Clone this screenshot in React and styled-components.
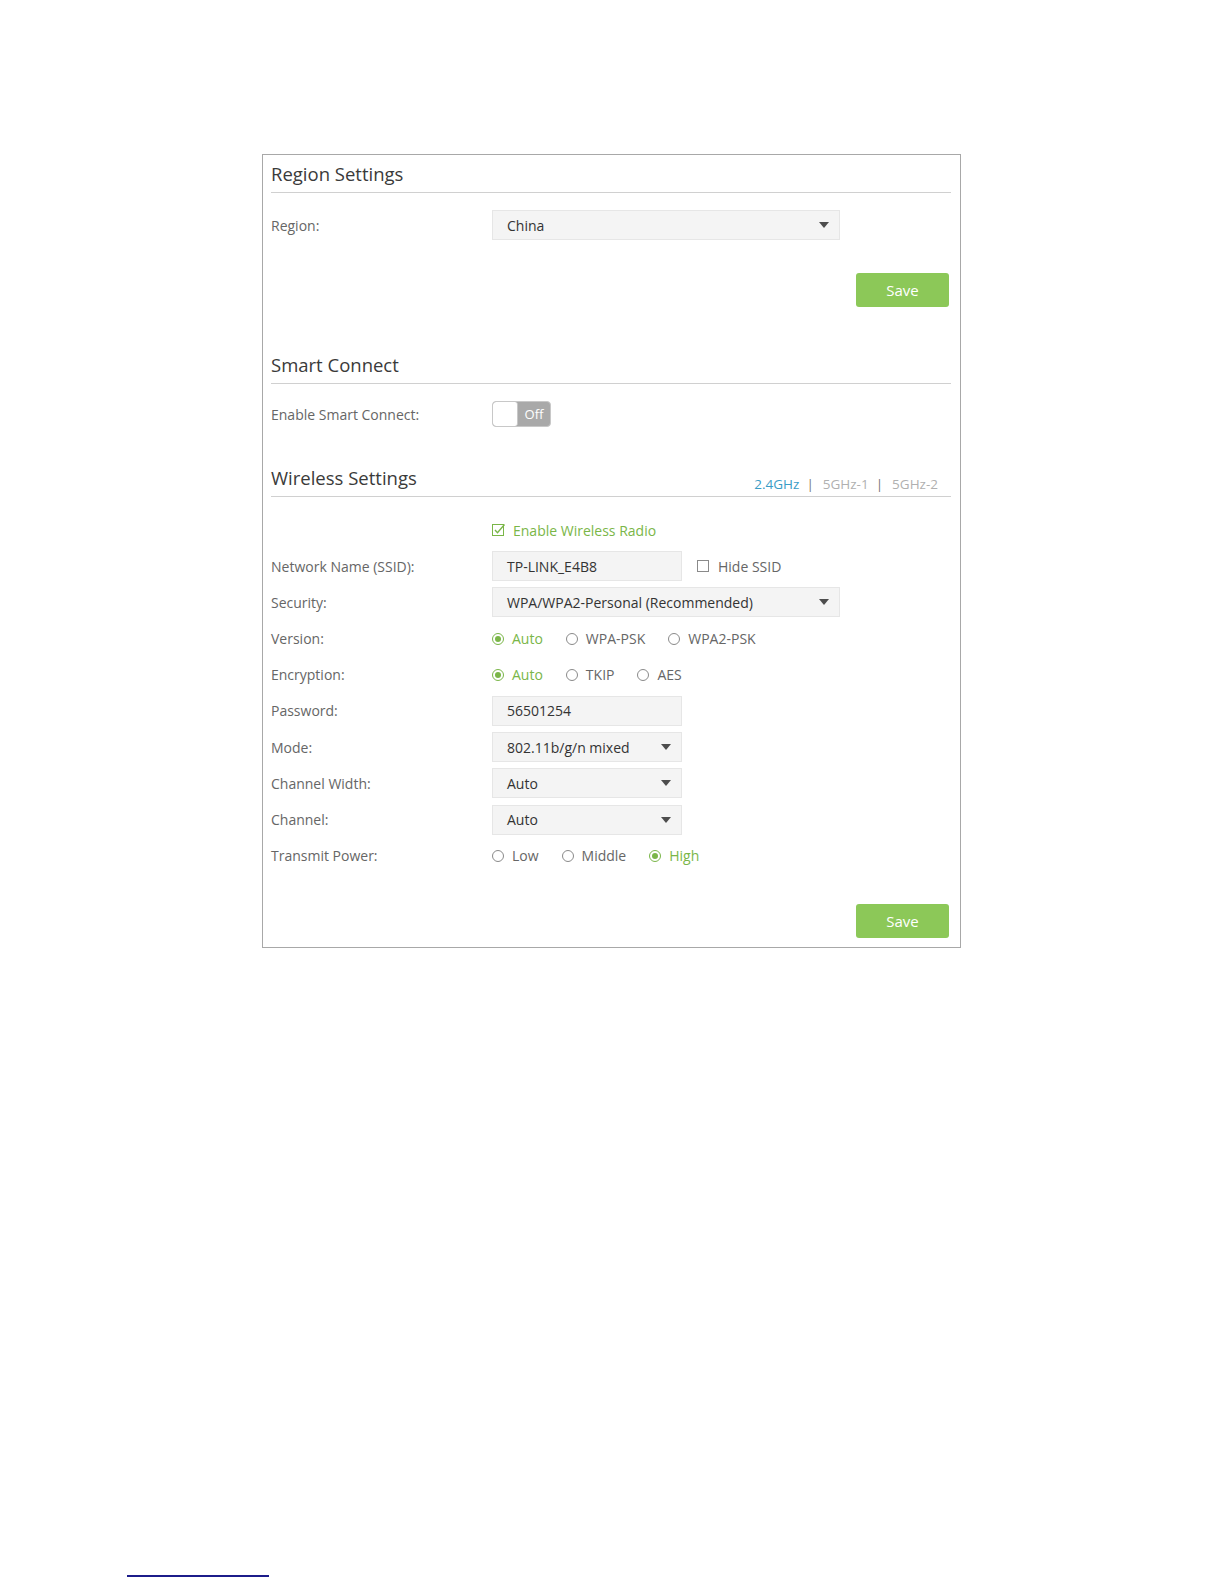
import styled, { createGlobalStyle } from 'styled-components';

const GlobalStyle = createGlobalStyle`
  body {
    margin: 0;
    background: #fff;
    font-family: "Open Sans", "Liberation Sans", sans-serif;
  }
`

const App = () => {
  return (
    <Page>
      <GlobalStyle />
      <Panel>
        <SectionHeader>
          <Title>Region Settings</Title>
        </SectionHeader>
        <Row top={17}>
          <Label>Region:</Label>
          <Field wide>China<Caret /></Field>
        </Row>
        <ButtonRow top={33}>
          <SaveButton>Save</SaveButton>
        </ButtonRow>

        <SectionHeader gap={39}>
          <Title>Smart Connect</Title>
        </SectionHeader>
        <Row top={15}>
          <Label>Enable Smart Connect:</Label>
          <Toggle>
            <Knob />
            <ToggleText>Off</ToggleText>
          </Toggle>
        </Row>

        <SectionHeader gap={30}>
          <Title>Wireless Settings</Title>
          <Tabs>
            <Tab active>2.4GHz</Tab>
            <Sep>|</Sep>
            <Tab>5GHz-1</Tab>
            <Sep>|</Sep>
            <Tab>5GHz-2</Tab>
          </Tabs>
        </SectionHeader>
        <Row top={18}>
          <Label />
          <Check checked>
            <CheckBox checked />
            Enable Wireless Radio
          </Check>
        </Row>
        <Row>
          <Label>Network Name (SSID):</Label>
          <Field>TP-LINK_E4B8</Field>
          <Check side>
            <CheckBox />
            Hide SSID
          </Check>
        </Row>
        <Row>
          <Label>Security:</Label>
          <Field wide>WPA/WPA2-Personal (Recommended)<Caret /></Field>
        </Row>
        <Row>
          <Label>Version:</Label>
          <Radios>
            <Radio checked><Dot checked />Auto</Radio>
            <Radio><Dot />WPA-PSK</Radio>
            <Radio><Dot />WPA2-PSK</Radio>
          </Radios>
        </Row>
        <Row>
          <Label>Encryption:</Label>
          <Radios>
            <Radio checked><Dot checked />Auto</Radio>
            <Radio><Dot />TKIP</Radio>
            <Radio><Dot />AES</Radio>
          </Radios>
        </Row>
        <Row>
          <Label>Password:</Label>
          <Field>56501254</Field>
        </Row>
        <Row>
          <Label>Mode:</Label>
          <Field>802.11b/g/n mixed<Caret /></Field>
        </Row>
        <Row>
          <Label>Channel Width:</Label>
          <Field>Auto<Caret /></Field>
        </Row>
        <Row>
          <Label>Channel:</Label>
          <Field>Auto<Caret /></Field>
        </Row>
        <Row>
          <Label>Transmit Power:</Label>
          <Radios>
            <Radio><Dot />Low</Radio>
            <Radio><Dot />Middle</Radio>
            <Radio checked><Dot checked />High</Radio>
          </Radios>
        </Row>
        <ButtonRow top={33}>
          <SaveButton>Save</SaveButton>
        </ButtonRow>
      </Panel>
      <Footnote />
    </Page>
  );
}

const CheckBox = ({ checked }) => (
  <svg width="14" height="14" viewBox="0 0 14 14" style={{ marginRight: 7, flexShrink: 0 }}>
    <rect x="0.5" y="1.5" width="11" height="11" fill="#fff" stroke={checked ? '#7ab648' : '#8a8a8a'} />
    {checked && <path d="M3 7 L5.5 9.8 L12.5 1.5" fill="none" stroke="#7ab648" strokeWidth="1.4" />}
  </svg>
)

const Page = styled.div`
  width: 1224px;
  min-height: 1584px;
  box-sizing: border-box;
  padding-top: 154px;
  overflow: hidden;
`

const Panel = styled.div`
  width: 699px;
  margin-left: 262px;
  box-sizing: border-box;
  border: 1px solid #a8a8a8;
  padding: 0 9px 9px 8px;
`

const SectionHeader = styled.div`
  display: flex;
  justify-content: space-between;
  align-items: baseline;
  height: 37px;
  margin-top: ${p => p.gap || 0}px;
  border-bottom: 1px solid #d0d0d0;
`

const Title = styled.h2`
  margin: 0;
  font-size: 18.5px;
  font-weight: 400;
  line-height: 37px;
  color: #3a3a3a;
`

const Tabs = styled.div`
  display: flex;
  align-items: baseline;
  margin-right: 13px;
  font-size: 13.5px;
  position: relative;
  top: 4px;
`

const Tab = styled.span`
  color: ${p => (p.active ? '#3a9cc6' : '#b0b0b0')};
`

const Sep = styled.span`
  color: #777;
  padding: 0 9px 0 7px;
`

const Row = styled.div`
  display: flex;
  align-items: center;
  height: 30px;
  margin-top: ${p => p.top ?? 6.2}px;
`

const Label = styled.div`
  width: 221px;
  flex-shrink: 0;
  font-size: 14px;
  color: #666;
`

const Field = styled.div`
  display: flex;
  align-items: center;
  justify-content: space-between;
  box-sizing: border-box;
  width: ${p => (p.wide ? 348 : 190)}px;
  height: 30px;
  padding: 0 10px 0 14px;
  background: #f4f4f4;
  border: 1px solid #e6e6e6;
  font-size: 14px;
  color: #333;
`

const Caret = styled.span`
  width: 0;
  height: 0;
  border-left: 5px solid transparent;
  border-right: 5px solid transparent;
  border-top: 6px solid #4d4d4d;
`

const ButtonRow = styled.div`
  display: flex;
  justify-content: flex-end;
  margin-top: ${p => p.top}px;
`

const SaveButton = styled.button`
  width: 93px;
  height: 34px;
  margin-right: 2px;
  border: none;
  border-radius: 3px;
  background: #8cc858;
  color: #fff;
  font-family: inherit;
  font-size: 15px;
  cursor: pointer;
`

const Toggle = styled.div`
  display: flex;
  width: 59px;
  height: 26px;
  box-sizing: border-box;
  border: 1px solid #c8c8c8;
  border-radius: 4px;
  background: #a9a9a9;
  overflow: hidden;
`

const Knob = styled.div`
  width: 24px;
  background: #fff;
  border-right: 1px solid #c8c8c8;
  border-radius: 3px;
`

const ToggleText = styled.span`
  flex: 1;
  text-align: center;
  line-height: 24px;
  font-size: 13px;
  color: #fff;
`

const Check = styled.label`
  display: flex;
  align-items: center;
  margin-left: ${p => (p.side ? 15 : 0)}px;
  font-size: 14px;
  color: ${p => (p.checked ? '#7ab648' : '#666')};
`

const Radios = styled.div`
  display: flex;
  align-items: center;
  gap: 23px;
`

const Radio = styled.label`
  display: flex;
  align-items: center;
  font-size: 14px;
  color: ${p => (p.checked ? '#7ab648' : '#666')};
`

const Dot = styled.span`
  position: relative;
  width: 12px;
  height: 12px;
  margin-right: 8px;
  box-sizing: border-box;
  border-radius: 50%;
  border: 1px solid ${p => (p.checked ? '#7ab648' : '#8a8a8a')};

  &::after {
    content: '';
    display: ${p => (p.checked ? 'block' : 'none')};
    position: absolute;
    left: 2px;
    top: 2px;
    width: 6px;
    height: 6px;
    border-radius: 50%;
    background: #7ab648;
  }
`

const Footnote = styled.div`
  width: 142px;
  margin: 627px 0 0 127px;
  border-top: 2px solid #1c1c8a;
`

export default App;
